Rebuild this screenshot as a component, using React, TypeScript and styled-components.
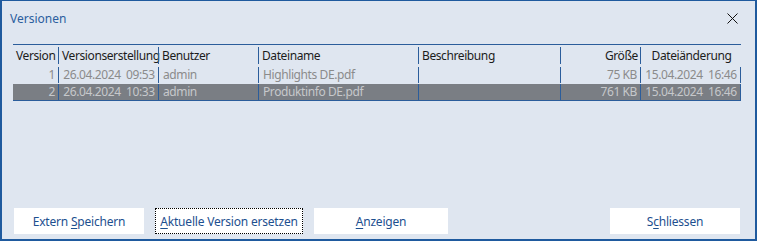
import React from 'react';
import styled, { createGlobalStyle } from 'styled-components';

const GlobalStyle = createGlobalStyle`
  html, body {
    margin: 0;
    padding: 0;
    background: #dfe6f0;
  }
  body {
    font-family: "Noto Sans", "Open Sans", sans-serif;
    font-size: 12px;
  }
`;

const Window = styled.div`
  box-sizing: border-box;
  width: 757px;
  height: 241px;
  background: #dfe6f0;
  border: 2px solid #1f5a9e;
  border-top-width: 1px;
  display: flex;
  flex-direction: column;
`;

const TitleBar = styled.div`
  height: 34px;
  display: flex;
  align-items: center;
  padding: 0 17px 0 8px;
  color: #2b5e9e;
`;

const Title = styled.div`
  flex: 1;
  padding-top: 1px;
`;

const CloseIcon = styled.svg`
  width: 11px;
  height: 11px;
  margin-top: 1px;
`;

const Table = styled.div`
  margin: 9px 0 0 11px;
  width: 728px;
  border-top: 1px solid #2b5d9b;
  border-bottom: 1px solid #2b5d9b;
  display: flex;
  flex-direction: column;
  gap: 1px;
  letter-spacing: -0.4px;
`;

const Row = styled.div<{ $head?: boolean; $selected?: boolean }>`
  display: grid;
  grid-template-columns: 45px 100px 100px 160px 142px 80px 101px;
  height: ${(p) => (p.$head ? '21px' : '16px')};
  background: ${(p) => (p.$selected ? '#7a7e84' : 'transparent')};
  color: ${(p) => (p.$head ? '#1c1c1c' : p.$selected ? '#c6c8cb' : '#8b8b8b')};
`;

const HeadCell = styled.div<{ $align?: string; $first?: boolean }>`
  border-left: ${(p) => (p.$first ? 'none' : '1px solid #2b5d9b')};
  margin: 2px 0 3px;
  padding: 0 2px 0 3px;
  line-height: 17px;
  text-align: ${(p) => p.$align || 'left'};
  white-space: nowrap;
  overflow: visible;
`;

const Cell = styled.div<{ $align?: string; $first?: boolean; $last?: boolean }>`
  border-left: ${(p) => (p.$first ? 'none' : '1px solid #2b5d9b')};
  border-right: ${(p) => (p.$last ? '1px solid #2b5d9b' : 'none')};
  padding: 0 3px 0 4px;
  line-height: 16px;
  text-align: ${(p) => p.$align || 'left'};
  white-space: pre;
  overflow: hidden;
`;

const Spacer = styled.div`
  flex: 1;
`;

const ButtonBar = styled.div`
  display: flex;
  gap: 11px;
  padding: 0 15px 5px 12px;
`;

const Button = styled.button<{ $w: number; $focus?: boolean; $right?: boolean }>`
  width: ${(p) => p.$w}px;
  height: 26px;
  background: #ffffff;
  border: ${(p) => (p.$focus ? '1px dotted #000' : '1px solid #fff')};
  color: #1d4f8f;
  font-family: inherit;
  font-size: 12px;
  letter-spacing: -0.2px;
  padding: 0;
  margin-left: ${(p) => (p.$right ? 'auto' : '0')};
  outline: none;
  u {
    text-underline-offset: 2px;
  }
`;

const headers: { t: string; a?: string }[] = [
  { t: 'Version' },
  { t: 'Versionserstellung' },
  { t: 'Benutzer' },
  { t: 'Dateiname' },
  { t: 'Beschreibung' },
  { t: 'Größe', a: 'right' },
  { t: 'Dateiänderung', a: 'center' },
];

const rows = [
  ['1', '26.04.2024  09:53', 'admin', 'Highlights DE.pdf', '', '75 KB', '15.04.2024  16:46'],
  ['2', '26.04.2024  10:33', 'admin', 'Produktinfo DE.pdf', '', '761 KB', '15.04.2024  16:46'],
];

const align = ['right', 'center', 'left', 'left', 'left', 'right', 'center'];

export default function App() {
  return (
    <>
      <GlobalStyle />
      <Window>
        <TitleBar>
          <Title>Versionen</Title>
          <CloseIcon viewBox="0 0 11 11">
            <path d="M0.5 0.5 L10.5 10.5 M10.5 0.5 L0.5 10.5" stroke="#111" strokeWidth="1" fill="none" />
          </CloseIcon>
        </TitleBar>
        <Table>
          <Row $head>
            {headers.map((h, i) => (
              <HeadCell key={h.t} $first={i === 0} $align={h.a}>
                {h.t}
              </HeadCell>
            ))}
          </Row>
          {rows.map((r, ri) => (
            <Row key={ri} $selected={ri === 1}>
              {r.map((c, i) => (
                <Cell key={i} $first={i === 0} $last={i === r.length - 1} $align={align[i]}>
                  {c}
                </Cell>
              ))}
            </Row>
          ))}
        </Table>
        <Spacer />
        <ButtonBar>
          <Button $w={130}>Extern <u>S</u>peichern</Button>
          <Button $w={148} $focus><u>A</u>ktuelle Version ersetzen</Button>
          <Button $w={134}><u>A</u>nzeigen</Button>
          <Button $w={130} $right>S<u>c</u>hliessen</Button>
        </ButtonBar>
      </Window>
    </>
  );
}
